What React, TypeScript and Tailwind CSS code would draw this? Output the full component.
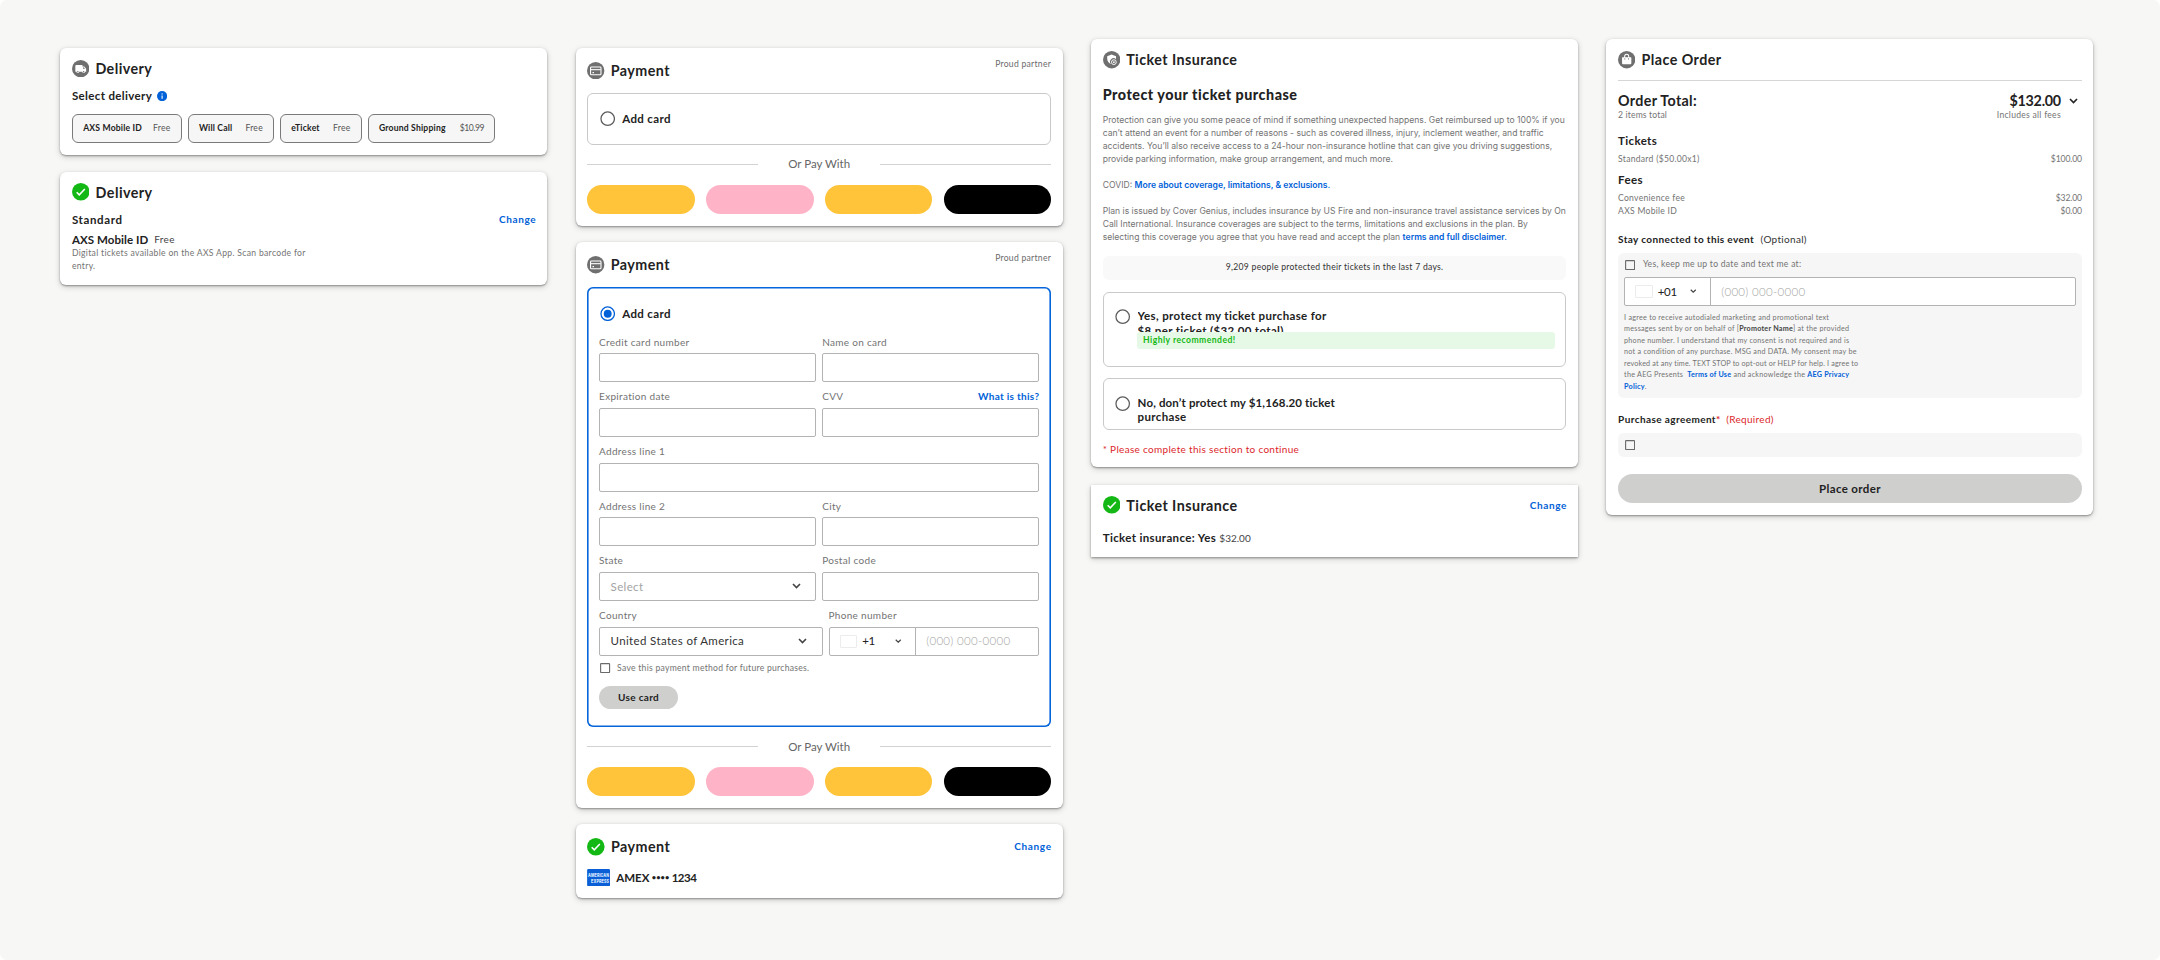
import type { ReactNode } from 'react';

const link = 'font-bold text-[#0061d8]';
const muted = 'text-[#737373]';
const small = 'text-[8.6px] leading-[13px]';

type Kids = { children?: ReactNode; className?: string };

const Card = ({ children, className = '' }: Kids) => (
  <section
    className={`w-[487px] bg-white px-[11.6px] shadow-[0_1px_2px_rgba(0,0,0,0.36),0_2px_6px_rgba(0,0,0,0.18)] ${className}`}
  >
    {children}
  </section>
);

/* ---------- Icons ---------- */

const Disc = ({ children }: Kids) => (
  <svg viewBox="0 0 24 24" className="size-[17.4px] shrink-0">
    <circle cx="12" cy="12" r="12" fill="#6f6f6f" />
    {children}
  </svg>
);

const TruckIcon = () => (
  <Disc>
    <path d="M6 7h8.5v2H17l2.5 3.2v4H18a1.9 1.9 0 0 1-3.8 0H10a1.9 1.9 0 0 1-3.8 0H4.6V8.4A1.4 1.4 0 0 1 6 7z" fill="#fff" />
    <path d="M15.2 10.2h1.4l1.4 1.9h-2.8z" fill="#6f6f6f" />
    <circle cx="8.1" cy="16.3" r="1" fill="#6f6f6f" />
    <circle cx="16.1" cy="16.3" r="1" fill="#6f6f6f" />
  </Disc>
);

const CardIcon = () => (
  <Disc>
    <rect x="4.9" y="7" width="14.4" height="10.6" rx="1.2" fill="none" stroke="#fff" strokeWidth="1.5" />
    <path d="M5 10.6h14" stroke="#fff" strokeWidth="1.5" />
    <path d="M7.6 14.6h2" stroke="#fff" strokeWidth="1.6" />
  </Disc>
);

const ShieldIcon = () => (
  <Disc>
    <path d="M11.8 5l6.2 2.3v4.2a4.6 4.6 0 0 0-6.8 6.8c-3.2-1.5-5.4-4.2-5.4-7.5V7.3z" fill="#fff" />
    <circle cx="15" cy="15.4" r="3.3" fill="none" stroke="#fff" strokeWidth="1.3" />
    <circle cx="15" cy="15.4" r="1.2" fill="#fff" />
  </Disc>
);

const BagIcon = () => (
  <Disc>
    <path d="M6.4 8.6h11.2a.8.8 0 0 1 .8.8v7.4a1.4 1.4 0 0 1-1.4 1.4H7a1.4 1.4 0 0 1-1.4-1.4V9.4a.8.8 0 0 1 .8-.8z" fill="#fff" />
    <path d="M9.2 9.5V7.4a2.8 2.8 0 0 1 5.6 0v2.1" fill="none" stroke="#fff" strokeWidth="1.4" />
    <circle cx="9.4" cy="10.9" r=".8" fill="#6f6f6f" />
    <circle cx="14.6" cy="10.9" r=".8" fill="#6f6f6f" />
  </Disc>
);

const DoneIcon = () => (
  <svg viewBox="0 0 24 24" className="size-[17.6px] shrink-0">
    <circle cx="12" cy="12" r="12" fill="#14b814" />
    <path d="M6.4 12.6l3.5 3.5 7.6-7.8" fill="none" stroke="#fff" strokeWidth="2.1" />
  </svg>
);

const InfoIcon = () => (
  <svg viewBox="0 0 20 20" className="size-[10.2px]">
    <circle cx="10" cy="10" r="10" fill="#0061d8" />
    <path d="M10 9v6" stroke="#fff" strokeWidth="2.2" />
    <circle cx="10" cy="5.8" r="1.3" fill="#fff" />
  </svg>
);

const Chevron = ({ className = 'w-[9px] text-[#444]' }: Kids) => (
  <svg viewBox="0 0 18 12" className={`shrink-0 ${className}`}>
    <path d="M2 2l7 7 7-7" fill="none" stroke="currentColor" strokeWidth="3.2" />
  </svg>
);

const AmexIcon = () => (
  <svg viewBox="0 0 69 52" className="h-[17.3px] w-[23.2px] shrink-0 font-['Inter',sans-serif]">
    <rect width="69" height="52" rx="4" fill="#0b5fd6" />
    <text x="3" y="24" fontSize="16" fontWeight="800" fill="#dcebff" textLength="63" lengthAdjust="spacingAndGlyphs">
      AMERICAN
    </text>
    <text x="12" y="42" fontSize="16" fontWeight="800" fill="#dcebff" textLength="54" lengthAdjust="spacingAndGlyphs">
      EXPRESS
    </text>
  </svg>
);

/* ---------- Form pieces ---------- */

const Title = ({ icon, children }: Kids & { icon: ReactNode }) => (
  <h2 className="flex h-[17.5px] items-center gap-[6.1px] text-[14.3px] leading-[17px] font-bold">
    {icon}
    <span>{children}</span>
  </h2>
);

const Change = () => <a className={`-mr-[0.6px] text-[10px] tracking-[0.065em]! ${link}`}>Change</a>;

const Radio = ({ checked = false }: { checked?: boolean }) => (
  <svg viewBox="0 0 16 16" className={`size-[15.4px] shrink-0 ${checked ? 'text-[#0061d8]' : 'text-[#5c5c5c]'}`}>
    <circle cx="8" cy="8" r="7" fill="none" stroke="currentColor" strokeWidth="1.3" />
    {checked && <circle cx="8" cy="8" r="4.1" fill="currentColor" />}
  </svg>
);

const Checkbox = () => (
  <svg viewBox="0 0 10 10" className="size-[10.2px] shrink-0">
    <rect x=".6" y=".6" width="8.8" height="8.8" rx=".5" fill="none" stroke="#6a6a6a" strokeWidth="1.1" />
  </svg>
);

const box = 'flex h-[29px] items-center rounded-[2px] border border-[#b3b3b3] bg-white text-[11.5px]';

const Field = ({ label, aside, children, className = 'flex-1' }: Kids & { label: string; aside?: string }) => (
  <div className={`h-[54.7px] ${className}`}>
    <div className="flex h-[17.5px] justify-between text-[10px] leading-[13px]">
      <span className={muted}>{label}</span>
      {aside && <a className={link}>{aside}</a>}
    </div>
    {children ?? <div className={box} />}
  </div>
);

const PhoneInput = ({ code, codeWidth }: { code: string; codeWidth: string }) => (
  <div className={box}>
    <div className={`flex h-full items-center border-r border-[#b3b3b3] pl-[10.2px] ${codeWidth}`}>
      <i className="mr-[5px] h-[13px] w-[17.5px] rounded-[1px] border border-[#ececec]" />
      <span className="flex-1 tracking-[-0.03em]!">{code}</span>
      <Chevron className="mr-[13px] w-[6.5px] text-[#444]" />
    </div>
    <span className="pl-[10.6px] font-light text-[#a3a3a3] tracking-[0.026em]!">(000) 000-0000</span>
  </div>
);

const PayWith = () => (
  <>
    <div className="flex h-4 items-center justify-between text-[11.5px] leading-4">
      <hr className="w-[171px] border-[#d2d2d2]" />
      <span className="text-[#666] tracking-normal!">Or Pay With</span>
      <hr className="w-[171px] border-[#d2d2d2]" />
    </div>
    <div className="mt-[12.3px] grid grid-cols-4 gap-[11.3px]">
      <div className="h-[29px] rounded-full bg-[#ffc439]" />
      <div className="h-[29px] rounded-full bg-[#ffb3c7]" />
      <div className="h-[29px] rounded-full bg-[#ffc439]" />
      <div className="h-[29px] rounded-full bg-black" />
    </div>
  </>
);

const PaymentHeader = () => (
  <div className="flex justify-between">
    <Title icon={<CardIcon />}>Payment</Title>
    <span className={`-mt-[4px] ${small} text-[#6b6b6b]`}>Proud partner</span>
  </div>
);

/* ---------- Columns ---------- */

const chips = [
  { name: 'AXS Mobile ID', price: 'Free', width: 'w-[110px]' },
  { name: 'Will Call', price: 'Free', width: 'w-[86.7px]' },
  { name: 'eTicket', price: 'Free', width: 'w-[82px]' },
  { name: 'Ground Shipping', price: '$10.99', width: 'w-[127.8px]' },
];

const DeliveryColumn = () => (
  <div className="mt-[47.7px] flex flex-col gap-[16.7px]">
    <Card className="h-[107.3px] rounded-[6px] pt-[11.8px]">
      <Title icon={<TruckIcon />}>Delivery</Title>
      <div className="mt-[12px] flex h-[14px] items-center gap-[4.5px] text-[11.5px] leading-[14px] font-bold">
        <span>Select delivery</span>
        <InfoIcon />
      </div>
      <div className="mt-[11.3px] flex gap-[5.7px]">
        {chips.map((c) => (
          <div
            key={c.name}
            className={`flex h-[29px] items-center justify-between rounded-[6px] border border-[#7a7a7a] bg-[#f6f6f6] px-[10.3px] text-[8.6px] ${c.width}`}
          >
            <span className="font-bold tracking-[0.022em]!">{c.name}</span>
            <span className={c.price === 'Free' ? 'text-[#555]' : 'text-[#555] tracking-[-0.05em]!'}>{c.price}</span>
          </div>
        ))}
      </div>
    </Card>

    <Card className="h-[113.3px] rounded-[6px] pt-[11.8px]">
      <Title icon={<DoneIcon />}>Delivery</Title>
      <div className="mt-[11px] flex h-4 items-center justify-between">
        <span className="text-[11.5px] font-bold tracking-[0.055em]!">Standard</span>
        <Change />
      </div>
      <div className="mt-[4px] flex h-4 items-center gap-[6px]">
        <span className="text-[11.5px] font-bold tracking-[0.006em]!">AXS Mobile ID</span>
        <span className="text-[10px] text-[#444]">Free</span>
      </div>
      <p className={`-mt-[0.7px] w-[250px] tracking-[0.037em]! ${small} ${muted}`}>
        Digital tickets available on the AXS App. Scan barcode for
        <br />
        entry.
      </p>
    </Card>
  </div>
);

const PaymentColumn = () => (
  <div className="mt-[47.7px] flex flex-col gap-[16.5px]">
    <Card className="h-[178px] rounded-[6px] pt-[14px]">
      <PaymentHeader />
      <div className="mt-[13.6px] flex h-[52.2px] items-center gap-[7px] rounded-[6px] border border-[#c9c9c9] pl-[11.5px]">
        <Radio />
        <span className="text-[11.5px] font-bold">Add card</span>
      </div>
      <div className="mt-[11.5px]">
        <PayWith />
      </div>
    </Card>

    <Card className="h-[565.4px] rounded-[6px] pt-[14px]">
      <PaymentHeader />
      <div className="mt-[13.6px] h-[439.6px] rounded-[6px] px-[11.8px] pt-[18px] shadow-[inset_0_0_0_1.6px_#0565da]">
        <div className="mb-[14.4px] flex h-4 items-center gap-[7px] pl-[0.7px]">
          <Radio checked />
          <span className="text-[11.5px] font-bold">Add card</span>
        </div>
        <div className="flex gap-[6px]">
          <Field label="Credit card number" />
          <Field label="Name on card" />
        </div>
        <div className="flex gap-[6px]">
          <Field label="Expiration date" />
          <Field label="CVV" aside="What is this?" />
        </div>
        <Field label="Address line 1" className="w-full" />
        <div className="flex gap-[6px]">
          <Field label="Address line 2" />
          <Field label="City" />
        </div>
        <div className="flex gap-[6px]">
          <Field label="State">
            <div className={`${box} justify-between pr-[14.5px] pl-[10.5px]`}>
              <span className="text-[#a3a3a3]">Select</span>
              <Chevron />
            </div>
          </Field>
          <Field label="Postal code" />
        </div>
        <div className="flex gap-[5.8px]">
          <Field label="Country" className="w-[223.7px]">
            <div className={`${box} justify-between pr-[14.5px] pl-[10.5px]`}>
              <span className="text-[#333]">United States of America</span>
              <Chevron />
            </div>
          </Field>
          <Field label="Phone number">
            <PhoneInput code="+1" codeWidth="w-[86px]" />
          </Field>
        </div>
        <div className="-mt-[3.5px] flex h-4 items-center gap-[6.5px] pl-[1.3px]">
          <Checkbox />
          <span className={`${small} ${muted}`}>Save this payment method for future purchases.</span>
        </div>
        <button className="mt-[9.5px] block h-[23px] w-[79px] rounded-full bg-[#cfcfce] text-[10px] font-bold">Use card</button>
      </div>
      <div className="mt-[11.8px]">
        <PayWith />
      </div>
    </Card>

    <Card className="h-[74px] rounded-[6px] pt-[14px]">
      <div className="flex items-center justify-between">
        <Title icon={<DoneIcon />}>Payment</Title>
        <Change />
      </div>
      <div className="mt-[13.5px] flex h-[17.3px] items-center text-[11.5px] font-bold">
        <AmexIcon />
        <span className="ml-[5.8px] tracking-normal!">AMEX</span>
        <span className="mx-[2.4px] text-[7.5px] tracking-normal!">••••</span>
        <span className="tracking-[-0.04em]!">1234</span>
      </div>
    </Card>
  </div>
);

const InsuranceColumn = () => (
  <div className="mt-[39.3px] flex flex-col gap-[17.7px]">
    <Card className="h-[428px] rounded-[6px] pt-[11.8px]">
      <Title icon={<ShieldIcon />}>Ticket Insurance</Title>
      <h3 className="mt-[17.5px] text-[14.3px] leading-[18px] font-black tracking-[0.036em]!">Protect your ticket purchase</h3>
      <div className="mt-[10px] font-['Inter',sans-serif] text-[8.6px] leading-[13px] whitespace-nowrap text-[#737373] **:tracking-normal!">
        <p>
          Protection can give you some peace of mind if something unexpected happens. Get reimbursed up to 100% if you
          <br />
          can’t attend an event for a number of reasons - such as covered illness, injury, inclement weather, and traffic
          <br />
          accidents. You’ll also receive access to a 24-hour non-insurance hotline that can give you driving suggestions,
          <br />
          provide parking information, make group arrangement, and much more.
        </p>
        <p className="mt-[13px]">
          COVID: <a className="font-semibold text-[#0061d8]">More about coverage, limitations, &amp; exclusions.</a>
        </p>
        <p className="mt-[13px]">
          Plan is issued by Cover Genius, includes insurance by US Fire and non-insurance travel assistance services by On
          <br />
          Call International. Insurance coverages are subject to the terms, limitations and exclusions in the plan. By
          <br />
          selecting this coverage you agree that you have read and accept the plan{' '}
          <a className="font-semibold text-[#0061d8]">terms and full disclaimer.</a>
        </p>
      </div>
      <div className="mt-[11.5px] flex h-[24.3px] items-center justify-center rounded-[6px] bg-[#f9f9f9] text-[8.6px] text-[#333]">
        9,209 people protected their tickets in the last 7 days.
      </div>

      <div className="mt-[11.7px] flex h-[75px] gap-[7px] rounded-[6px] border border-[#c9c9c9] pt-[16.9px] pr-[10.5px] pl-[11.5px]">
        <Radio />
        <div className="flex-1 text-[11.5px] leading-[14.3px] font-bold">
          {/* second line runs under the recommendation strip */}
          <p className="h-[22.4px] overflow-hidden">
            Yes, protect my ticket purchase for
            <br />
            $8 per ticket ($32.00 total)
          </p>
          <div className="-ml-[0.5px] flex h-[17px] items-center rounded-[3px] bg-[#e6f9e6] pl-[6px] text-[8.6px] text-[#14b814]">
            <span className="tracking-[0.053em]!">Highly recommended!</span>
          </div>
        </div>
      </div>

      <div className="mt-[11.5px] flex h-[51.6px] gap-[7px] rounded-[6px] border border-[#c9c9c9] pt-[17.1px] pl-[11.5px]">
        <Radio />
        <p className="text-[11.5px] leading-[14.3px] font-bold">
          <span className="tracking-[0.013em]!">No, don’t protect my $1,168.20 ticket</span>
          <br />
          purchase
        </p>
      </div>
      <p className="mt-[12px] text-[10px] leading-[14px] text-[#dc1f2b]">* Please complete this section to continue</p>
    </Card>

    <Card className="h-[71.7px] pt-[11.3px]">
      <div className="flex items-center justify-between">
        <Title icon={<DoneIcon />}>Ticket Insurance</Title>
        <Change />
      </div>
      <p className="mt-[16.7px] text-[11.5px] leading-4 font-bold">
        Ticket insurance: Yes <span className="text-[10px] font-normal text-[#444] tracking-normal!">$32.00</span>
      </p>
    </Card>
  </div>
);

const Line = ({ name, price }: { name: string; price: string }) => (
  <div className={`flex justify-between ${small} ${muted}`}>
    <span>{name}</span>
    <span className="tracking-[-0.015em]!">{price}</span>
  </div>
);

const OrderColumn = () => (
  <div className="mt-[39.3px]">
    <Card className="h-[475.7px] rounded-[6px] pt-[11.8px]">
      <Title icon={<BagIcon />}>Place Order</Title>
      <hr className="mt-[11.5px] border-[#d6d6d6]" />
      <div className="mt-[10.5px] flex h-[18px] items-center text-[14.3px] leading-[18px] font-bold">
        <span className="flex-1 tracking-[0.022em]!">Order Total:</span>
        <span className="tracking-[-0.018em]!">$132.00</span>
        <Chevron className="mr-[4px] ml-[8px] w-[9px] text-[#222]" />
      </div>
      <div className={`-mt-[0.7px] flex justify-between pr-[21px] ${small} ${muted}`}>
        <span className="tracking-[0.017em]!">2 items total</span>
        <span>Includes all fees</span>
      </div>

      <h3 className="mt-[11.1px] text-[11.5px] leading-4 font-bold">Tickets</h3>
      <div className="mt-[4.2px]">
        <Line name="Standard ($50.00x1)" price="$100.00" />
      </div>
      <h3 className="mt-[5.8px] text-[11.5px] leading-4 font-bold">Fees</h3>
      <div className="mt-[4.2px]">
        <Line name="Convenience fee" price="$32.00" />
        <Line name="AXS Mobile ID" price="$0.00" />
      </div>

      <div className="mt-[13.5px] flex gap-[6.5px] text-[10px] leading-[14px]">
        <span className="font-bold tracking-[0.036em]!">Stay connected to this event</span>
        <span className="text-[#333]">(Optional)</span>
      </div>
      <div className="mt-[7.3px] h-[144.7px] rounded-[6px] bg-[#f6f6f6] px-[6px] pt-[4px]">
        <div className="flex h-4 items-center gap-[7.5px] pl-[1.2px]">
          <Checkbox />
          <span className={`${small} ${muted}`}>Yes, keep me up to date and text me at:</span>
        </div>
        <div className="mt-[4px]">
          <PhoneInput code="+01" codeWidth="w-[85.5px]" />
        </div>
        <p className={`mt-[6px] text-[7.2px] leading-[11.5px] whitespace-nowrap tracking-[0.035em]! ${muted}`}>
          I agree to receive autodialed marketing and promotional text
          <br />
          messages sent by or on behalf of [<b className="text-[#444]">Promoter Name</b>] at the provided
          <br />
          phone number. I understand that my consent is not required and is
          <br />
          not a condition of any purchase. MSG and DATA. My consent may be
          <br />
          <span className="tracking-[0.022em]!">revoked at any time. TEXT STOP to opt-out or HELP for help. I agree to</span>
          <br />
          the AEG Presents &nbsp;<a className={link}>Terms of Use</a> and acknowledge the <a className={link}>AEG Privacy</a>
          <br />
          <a className={link}>Policy</a>.
        </p>
      </div>

      <div className="mt-[14px] flex gap-[5.7px] text-[10px] leading-[14px]">
        <span className="font-bold tracking-[0.04em]!">
          Purchase agreement<span className="text-[#dc1f2b]">*</span>
        </span>
        <span className="text-[#dc1f2b]">(Required)</span>
      </div>
      <div className="mt-[7.3px] flex h-[24px] items-center rounded-[6px] bg-[#f6f6f6] pl-[7.2px]">
        <Checkbox />
      </div>
      <button className="mt-[17.3px] block h-[29px] w-full rounded-full bg-[#cfcfce] text-[11.5px] font-bold">
        Place order
      </button>
    </Card>
  </div>
);

export default function App() {
  return (
    <main className="flex h-[960px] w-[2160px] items-start gap-[28.4px] rounded-[7px] bg-[#f7f7f5] pl-[60.3px] font-['Lato',sans-serif] text-[#222] **:tracking-[0.031em]">
      <DeliveryColumn />
      <PaymentColumn />
      <InsuranceColumn />
      <OrderColumn />
    </main>
  );
}
